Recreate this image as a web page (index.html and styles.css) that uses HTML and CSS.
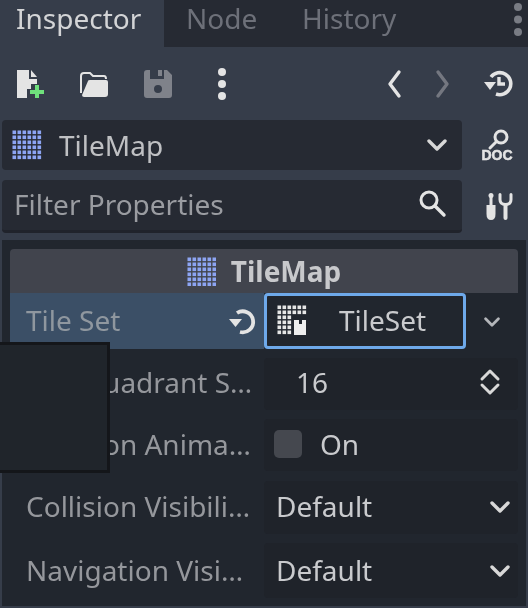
FILE: index.html
```html
<!DOCTYPE html>
<html lang="en">
<head>
    <meta charset="UTF-8">
    <meta name="viewport" content="width=device-width, initial-scale=1.0">
    <title>Inspector</title>
    <link rel="stylesheet" href="styles.css">
</head>
<body>
    <svg class="defs" width="0" height="0">
        <defs>
            <pattern id="dots" width="5" height="5" patternUnits="userSpaceOnUse">
                <rect x="0.5" y="0.5" width="3.6" height="3.6" fill="#8da5f3"/>
            </pattern>
            <pattern id="white-dots" width="5" height="5" patternUnits="userSpaceOnUse">
                <rect x="0.5" y="0.5" width="3.6" height="3.6" fill="#e6e6e6"/>
            </pattern>
            <symbol id="chevron" viewBox="0 0 20 12">
                <path d="M2 2l8 8 8-8" fill="none" stroke="currentColor" stroke-width="3.4" stroke-linecap="round" stroke-linejoin="round"/>
            </symbol>
        </defs>
    </svg>

    <div class="inspector">
        <div class="tabs">
            <div class="tab active">Inspector</div>
            <div class="tab">Node</div>
            <div class="tab">History</div>
            <svg class="tab-menu" width="8" height="36" viewBox="0 0 8 36">
                <circle cx="4" cy="6" r="4"/><circle cx="4" cy="18.5" r="4"/><circle cx="4" cy="31" r="4"/>
            </svg>
        </div>

        <div class="toolbar">
            <svg class="icon" viewBox="0 0 28 28">
                <path d="M1 0h12v9h8v5h-6v5h-4v9H1z" fill="#e4e4e4"/>
                <path d="M15 0l6 7h-6z" fill="#e4e4e4"/>
                <path d="M19 15h4v5h5v4h-5v4h-4v-4h-5v-4h5z" fill="#6fe07c"/>
            </svg>
            <svg class="icon" viewBox="0 0 28 28">
                <path d="M1 23V6q0-3 3-3h6l3 3h11q2 0 2 3" fill="none" stroke="#e4e4e4" stroke-width="2"/>
                <path d="M8 11q0-1 2-1h16q2 0 2 2v12q0 3-3 3H4q-2 0-2-2z" fill="#e4e4e4"/>
            </svg>
            <svg class="icon" viewBox="0 0 28 28">
                <path fill-rule="evenodd" fill="#7f828a" d="M3 0h3v9h14V0h3l5 5v20q0 3-3 3H3q-3 0-3-3V3q0-3 3-3zM14 15a4 4 0 1 0 0 8 4 4 0 0 0 0-8z"/>
                <rect x="14" y="0" width="4" height="6" fill="#7f828a"/>
            </svg>
            <svg class="icon" viewBox="0 0 28 28">
                <g fill="#e4e4e4"><circle cx="14" cy="2" r="4"/><circle cx="14" cy="14" r="4"/><circle cx="14" cy="26" r="4"/></g>
            </svg>
            <svg class="icon nav-back" viewBox="0 0 28 28">
                <path d="M18 2L9 14l9 12" fill="none" stroke="#e4e4e4" stroke-width="3.4" stroke-linecap="round" stroke-linejoin="round"/>
            </svg>
            <svg class="icon nav-forward" viewBox="0 0 28 28">
                <path d="M10 2l9 12-9 12" fill="none" stroke="#747780" stroke-width="3.4" stroke-linecap="round" stroke-linejoin="round"/>
            </svg>
            <svg class="icon nav-history" viewBox="0 0 28 28">
                <path d="M7 7a11 11 0 1 1 5 17" fill="none" stroke="#e4e4e4" stroke-width="3.600"/>
                <path d="M0 12h12l-6 8z" fill="#e4e4e4"/>
                <path d="M15 7v7h6" fill="none" stroke="#e4e4e4" stroke-width="3.400"/>
            </svg>
        </div>

        <div class="field-row">
            <div class="picker">
                <svg class="tile-icon" width="30" height="30" viewBox="0 0 30 30">
                    <rect width="30" height="30" fill="url(#dots)"/>
                </svg>
                <span class="picker-name">TileMap</span>
                <svg class="chevron picker-chevron"><use href="#chevron"/></svg>
            </div>
            <svg class="side-icon" viewBox="0 0 32 32">
                <circle cx="20" cy="8" r="6" fill="none" stroke="#e4e4e4" stroke-width="3"/>
                <path d="M15 13L9 19" stroke="#e4e4e4" stroke-width="3" stroke-linecap="round"/>
                <text x="16" y="31" class="doc-text">DOC</text>
            </svg>
        </div>

        <div class="field-row filter-row">
            <div class="filter">
                <span class="filter-text">Filter Properties</span>
                <svg class="search-icon" viewBox="0 0 28 28">
                    <circle cx="11" cy="10" r="8" fill="none" stroke="#e4e4e4" stroke-width="3"/>
                    <path d="M17 16l9 9" stroke="#e4e4e4" stroke-width="3.400" stroke-linecap="round"/>
                </svg>
            </div>
            <svg class="side-icon" viewBox="0 0 32 32">
                <g fill="#e4e4e4">
                    <circle cx="10" cy="4.500" r="2.500"/>
                    <rect x="8.500" y="4" width="3" height="11"/>
                    <path d="M5.500 14h9v9q0 6-4.500 6t-4.500-6z"/>
                    <rect x="22.500" y="12" width="4" height="17" rx="2"/>
                </g>
                <path d="M19 3.500v5q0 5 5.500 5t5.500-5v-5" fill="none" stroke="#e4e4e4" stroke-width="3" stroke-linecap="round"/>
            </svg>
        </div>

        <div class="panel">
            <div class="section-title">
                <svg class="tile-icon" width="29" height="29" viewBox="0 0 29 29">
                    <rect width="29" height="29" fill="url(#dots)"/>
                </svg>
                <span>TileMap</span>
            </div>

            <div class="prop prop-changed">
                <div class="prop-label">
                    <span>Tile Set</span>
                    <svg class="revert-icon" viewBox="0 0 28 26">
                        <path d="M8 5a10.500 10.500 0 1 1 3 19" fill="none" stroke="#e4e4e4" stroke-width="3.800"/>
                        <path d="M0 11h13l-6.500 8z" fill="#e4e4e4"/>
                    </svg>
                </div>
                <div class="resource-slot">
                    <svg class="tileset-icon" width="30" height="30" viewBox="0 0 30 30">
                        <path d="M0 0h30v10H15v20H0z" fill="url(#white-dots)"/>
                        <path d="M17 15h5v4h3v-4h4v15H17z" fill="#eee"/>
                    </svg>
                    <span class="resource-name">TileSet</span>
                </div>
                <svg class="chevron resource-chevron"><use href="#chevron"/></svg>
            </div>

            <div class="prop prop-raised">
                <div class="prop-label"><span>Cell Quadrant S…</span></div>
                <div class="value">
                    <span class="value-number">16</span>
                    <svg class="updown" viewBox="0 0 20 28">
                        <path d="M2 11l8-8 8 8M2 17l8 8 8-8" fill="none" stroke="#d8d8d8" stroke-width="3" stroke-linecap="round" stroke-linejoin="round"/>
                    </svg>
                </div>
            </div>

            <div class="prop">
                <div class="prop-label"><span>Collision Anima…</span></div>
                <div class="value">
                    <span class="checkbox"></span>
                    <span class="value-on">On</span>
                </div>
            </div>

            <div class="prop prop-raised">
                <div class="prop-label"><span>Collision Visibili…</span></div>
                <div class="value">
                    <span>Default</span>
                    <svg class="chevron value-chevron"><use href="#chevron"/></svg>
                </div>
            </div>

            <div class="prop prop-last">
                <div class="prop-label"><span>Navigation Visi…</span></div>
                <div class="value">
                    <span>Default</span>
                    <svg class="chevron value-chevron"><use href="#chevron"/></svg>
                </div>
            </div>
        </div>

        <div class="tooltip"></div>
    </div>
</body>
</html>
```

FILE: styles.css
```css
html, body {
    margin: 0;
    padding: 0;
    background: #363d4a;
}

.defs {
    position: absolute;
}

.inspector {
    position: relative;
    width: 528px;
    height: 608px;
    overflow: hidden;
    background: #363d4a;
    font-family: 'Noto Sans', sans-serif;
    font-size: 28px;
    color: #c9cacd;
    filter: blur(0.6px);
}

svg {
    display: block;
    flex-shrink: 0;
    overflow: visible;
}

/* Tabs */
.tabs {
    display: flex;
    align-items: center;
    height: 47px;
    background: #262a33;
}

.tab {
    height: 47px;
    line-height: 36px;
    padding: 0 22px;
    color: #6d7079;
    box-sizing: border-box;
}

.tab:nth-child(2) {
    width: 116px;
}

.tab.active {
    width: 164px;
    padding-left: 16px;
    background: #363d4a;
    color: #d3d4d6;
}

.tab-menu {
    margin-left: auto;
    margin-right: 6px;
    margin-top: -9px;
    fill: #797c84;
}

/* Toolbar */
.toolbar {
    display: flex;
    align-items: center;
    gap: 36px;
    height: 73px;
    padding: 0 16px;
    box-sizing: border-box;
}

.icon {
    width: 28px;
    height: 28px;
}

.nav-back {
    margin-left: auto;
}

.nav-forward {
    margin-left: -17px;
}

.nav-history {
    margin-left: -8px;
}

/* Picker and filter */
.field-row {
    display: flex;
    align-items: center;
    height: 50px;
    padding-left: 2px;
}

.filter-row {
    height: 53px;
    margin-top: 10px;
}

.picker, .filter {
    display: flex;
    align-items: center;
    width: 460px;
    height: 100%;
    background: #262a33;
    border-radius: 4px;
}

.filter {
    border-bottom: 3px solid #20232b;
    box-sizing: border-box;
    color: #9a9ca1;
}

.picker .tile-icon {
    margin-left: 10px;
}

.picker-name {
    margin-left: 17px;
    color: #bfc0c3;
}

.chevron {
    width: 20px;
    height: 12px;
    color: #d8d8d8;
}

.picker-chevron {
    margin-left: auto;
    margin-right: 15px;
}

.filter-text {
    margin-left: 12px;
    margin-top: -2px;
}

.search-icon {
    width: 28px;
    height: 28px;
    margin-left: auto;
    margin-right: 16px;
    margin-top: -3px;
}

.side-icon {
    width: 32px;
    height: 32px;
    margin-left: 19px;
}

.doc-text {
    font-family: 'Liberation Sans', sans-serif;
    font-size: 14px;
    font-weight: bold;
    fill: #e4e4e4;
    stroke: #e4e4e4;
    stroke-width: 0.5;
    text-anchor: middle;
}

/* Property panel */
.panel {
    margin: 7px 2px 0;
    padding: 9px 8px 8px;
    background: #21262e;
    height: 366px;
    box-sizing: border-box;
}

.section-title {
    display: flex;
    align-items: center;
    justify-content: center;
    gap: 15px;
    height: 44px;
    background: #41444d;
    border-radius: 4px 4px 0 0;
    font-weight: bold;
    color: #c8c9cc;
}

.prop {
    display: flex;
    height: 52px;
    margin-top: 9px;
}

.prop-label {
    display: flex;
    align-items: center;
    width: 254px;
    padding: 0 2px 2px 16px;
    box-sizing: border-box;
    color: #95979c;
    white-space: nowrap;
}

.value {
    display: flex;
    align-items: center;
    flex: 1;
    padding: 0 8px 2px 12px;
    background: #1f232a;
    border-radius: 4px;
}

.prop-raised .prop-label, .prop-raised .value {
    padding-bottom: 4px;
}

.prop-changed {
    height: 56px;
    margin-top: 0;
    align-items: center;
}

.prop-changed .prop-label {
    height: 56px;
    background: #3b4f66;
    color: #8f979f;
}

.revert-icon {
    width: 28px;
    height: 26px;
    margin-left: auto;
    margin-right: 5px;
    margin-top: 2px;
}

.resource-slot {
    display: flex;
    align-items: center;
    width: 202px;
    height: 56px;
    padding: 0 0 2px 10px;
    border: 3px solid #6ea9ea;
    border-radius: 4px;
    box-sizing: border-box;
    background: #21262e;
}

.resource-name {
    margin-left: 32px;
}

.resource-chevron {
    width: 16px;
    height: 10px;
    margin-left: 18px;
    margin-top: 2px;
    color: #b4b6ba;
}

.value-number {
    margin-left: 20px;
}

.updown {
    width: 20px;
    height: 28px;
    margin-left: auto;
    margin-right: 10px;
}

.checkbox {
    width: 28px;
    height: 28px;
    margin-left: -2px;
    border-radius: 5px;
    background: #45484f;
}

.value-on {
    margin-left: 18px;
}

.value-chevron {
    margin-left: auto;
    margin-top: 2px;
}

.prop:nth-child(5) {
    margin-top: 10px;
    height: 53px;
}

.prop-last {
    height: 55px;
}

/* Tooltip lying over the labels */
.tooltip {
    position: absolute;
    left: -3px;
    top: 342px;
    width: 107px;
    height: 125px;
    background: #20252b;
    border: 3px solid #14161a;
}
```
